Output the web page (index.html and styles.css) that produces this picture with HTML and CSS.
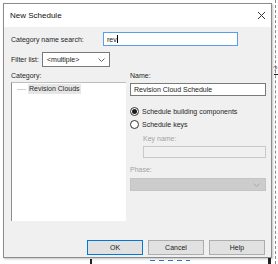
FILE: index.html
```html
<!DOCTYPE html>
<html lang="en">
<head>
  <meta charset="UTF-8">
  <title>New Schedule</title>
  <link rel="stylesheet" href="styles.css">
</head>
<body>
  <!-- drawing behind the dialog -->
  <div class="sheet-line"></div>
  <div class="sheet-mark mark-q">?</div>
  <div class="sheet-mark mark-a"></div>
  <div class="sheet-mark mark-b"></div>
  <div class="sheet-mark mark-c"></div>
  <div class="sheet-mark mark-d"></div>

  <div class="dialog">
    <div class="titlebar">
      <span class="title">New Schedule</span>
      <svg class="close" width="9" height="9" viewBox="0 0 9 9">
        <path d="M1 1 L8 8 M8 1 L1 8" stroke="#333" stroke-width="1" fill="none"/>
      </svg>
    </div>

    <div class="content">
      <div class="row search-row">
        <span class="label search-label">Category name search:</span>
        <div class="field search-field">rev<span class="caret"></span></div>
      </div>

      <div class="row filter-row">
        <span class="label filter-label">Filter list:</span>
        <div class="field select">
          <span>&lt;multiple&gt;</span>
          <svg width="7" height="4" viewBox="0 0 7 4"><path d="M0.5 0.5 L3.5 3.5 L6.5 0.5" stroke="#666" fill="none"/></svg>
        </div>
      </div>

      <div class="columns">
        <div class="col-left">
          <div class="label">Category:</div>
          <div class="listbox">
            <div class="tree-item">
              <span class="tree-dots"></span>
              <span class="tree-text">Revision Clouds</span>
            </div>
          </div>
        </div>

        <div class="col-right">
          <div class="label">Name:</div>
          <div class="field name-field">Revision Cloud Schedule</div>

          <div class="radio-row first">
            <span class="radio checked"></span>
            <span>Schedule building components</span>
          </div>
          <div class="radio-row">
            <span class="radio"></span>
            <span>Schedule keys</span>
          </div>

          <div class="label disabled key-label">Key name:</div>
          <div class="field key-field"></div>

          <div class="label disabled phase-label">Phase:</div>
          <div class="field phase-select">
            <svg width="7" height="4" viewBox="0 0 7 4"><path d="M0.5 0.5 L3.5 3.5 L6.5 0.5" stroke="#a8a8a8" fill="none"/></svg>
          </div>
        </div>
      </div>

      <div class="buttons">
        <div class="btn default">OK</div>
        <div class="btn">Cancel</div>
        <div class="btn">Help</div>
      </div>
    </div>
  </div>
</body>
</html>
```

FILE: styles.css
```css
body {
  margin: 0;
  width: 278px;
  height: 264px;
  background-color: #fff;
  font-family: 'Liberation Sans', Arial, sans-serif;
  font-size: 7px;
  color: #262626;
  position: relative;
  overflow: hidden;
}

/* drawing fragments behind the dialog */
.sheet-line {
  position: absolute;
  left: 275px;
  top: 0;
  height: 264px;
  border-left: 1px dashed #8a8a8a;
}

.sheet-mark {
  position: absolute;
  background-color: #222;
}

.mark-q {
  left: 273px;
  top: 64px;
  background: none;
  font-size: 8px;
  color: #444;
}

.mark-a {
  left: 90px;
  top: 259px;
  width: 2px;
  height: 5px;
}

.mark-b {
  left: 150px;
  top: 260px;
  width: 40px;
  height: 1px;
  background: repeating-linear-gradient(90deg, #3a6fd0 0 5px, transparent 5px 9px);
}

.mark-c {
  left: 268px;
  top: 258px;
  width: 3px;
  height: 6px;
}

.mark-d {
  left: 274px;
  top: 74px;
  width: 4px;
  height: 1px;
}

.dialog {
  position: relative;
  margin: 3px 0 0 3px;
  width: 269px;
  height: 255px;
  box-sizing: border-box;
  border: 1px solid #8c8c8c;
  background-color: #f0f0f0;
  box-shadow: 1px 1px 2px rgba(0, 0, 0, 0.25);
  display: flex;
  flex-direction: column;
}

.titlebar {
  height: 23px;
  background-color: #fff;
  display: flex;
  align-items: center;
  justify-content: space-between;
  padding: 0 5px 0 6px;
}

.title {
  font-size: 8px;
  color: #111;
}

.content {
  flex: 1;
  display: flex;
  flex-direction: column;
  padding: 0 5px 2px 7px;
}

.row {
  display: flex;
  align-items: center;
}

.search-row {
  margin-top: 5px;
}

.search-label {
  width: 92px;
}

.field {
  box-sizing: border-box;
  background-color: #fff;
  border: 1px solid #7a7a7a;
  display: flex;
  align-items: center;
  padding: 0 3px;
  color: #1a1a1a;
}

.search-field {
  width: 135px;
  height: 14px;
  border-color: #5a9ee6;
}

.caret {
  display: inline-block;
  width: 1px;
  height: 8px;
  background-color: #000;
}

.filter-row {
  margin-top: 6px;
}

.filter-label {
  width: 31px;
}

.select {
  width: 68px;
  height: 15px;
  justify-content: space-between;
  padding: 0 4px 0 4px;
}

.columns {
  display: flex;
  gap: 4px;
  margin-top: 4px;
}

.label {
  height: 9px;
  line-height: 9px;
}

.label.disabled {
  color: #a3a3a3;
}

.col-left {
  width: 115px;
}

.listbox {
  margin-top: 2px;
  height: 139px;
  box-sizing: border-box;
  background-color: #fff;
  border-left: 1px solid #8f8f8f;
  border-top: 1px solid #bdbdbd;
  padding-top: 1px;
}

.tree-item {
  display: flex;
  align-items: center;
  height: 10px;
}

.tree-dots {
  width: 9px;
  margin: 0 2px 0 5px;
  border-top: 1px solid #cfcfcf;
}

.tree-text {
  background-color: #e6e6e6;
  padding: 0 1px;
  line-height: 10px;
}

.col-right {
  width: 136px;
  display: flex;
  flex-direction: column;
}

.name-field {
  margin-top: 3px;
  height: 13px;
}

.radio-row {
  display: flex;
  align-items: center;
  gap: 3px;
  height: 11px;
  margin-top: 2px;
}

.radio-row.first {
  margin-top: 10px;
}

.radio {
  width: 9px;
  height: 9px;
  box-sizing: border-box;
  border: 1px solid #333;
  border-radius: 50%;
  background-color: #fff;
  display: flex;
  align-items: center;
  justify-content: center;
}

.radio.checked::after {
  content: "";
  width: 5px;
  height: 5px;
  border-radius: 50%;
  background-color: #1a1a1a;
}

.key-label {
  margin: 4px 0 0 13px;
}

.key-field {
  margin: 3px 0 0 13px;
  height: 12px;
  background-color: #f0f0f0;
  border-color: #c8c8c8;
}

.phase-label {
  margin-top: 7px;
}

.phase-select {
  margin-top: 4px;
  height: 13px;
  background-color: #cccccc;
  border-color: #c4c4c4;
  justify-content: flex-end;
  padding-right: 5px;
}

.buttons {
  margin-top: auto;
  display: flex;
  justify-content: flex-end;
  gap: 5px;
  padding-right: 1px;
}

.btn {
  width: 56px;
  height: 15px;
  box-sizing: border-box;
  background-color: #e1e1e1;
  border: 1px solid #adadad;
  display: flex;
  align-items: center;
  justify-content: center;
  color: #1a1a1a;
}

.btn.default {
  border: 1px solid #0078d7;
}
```
